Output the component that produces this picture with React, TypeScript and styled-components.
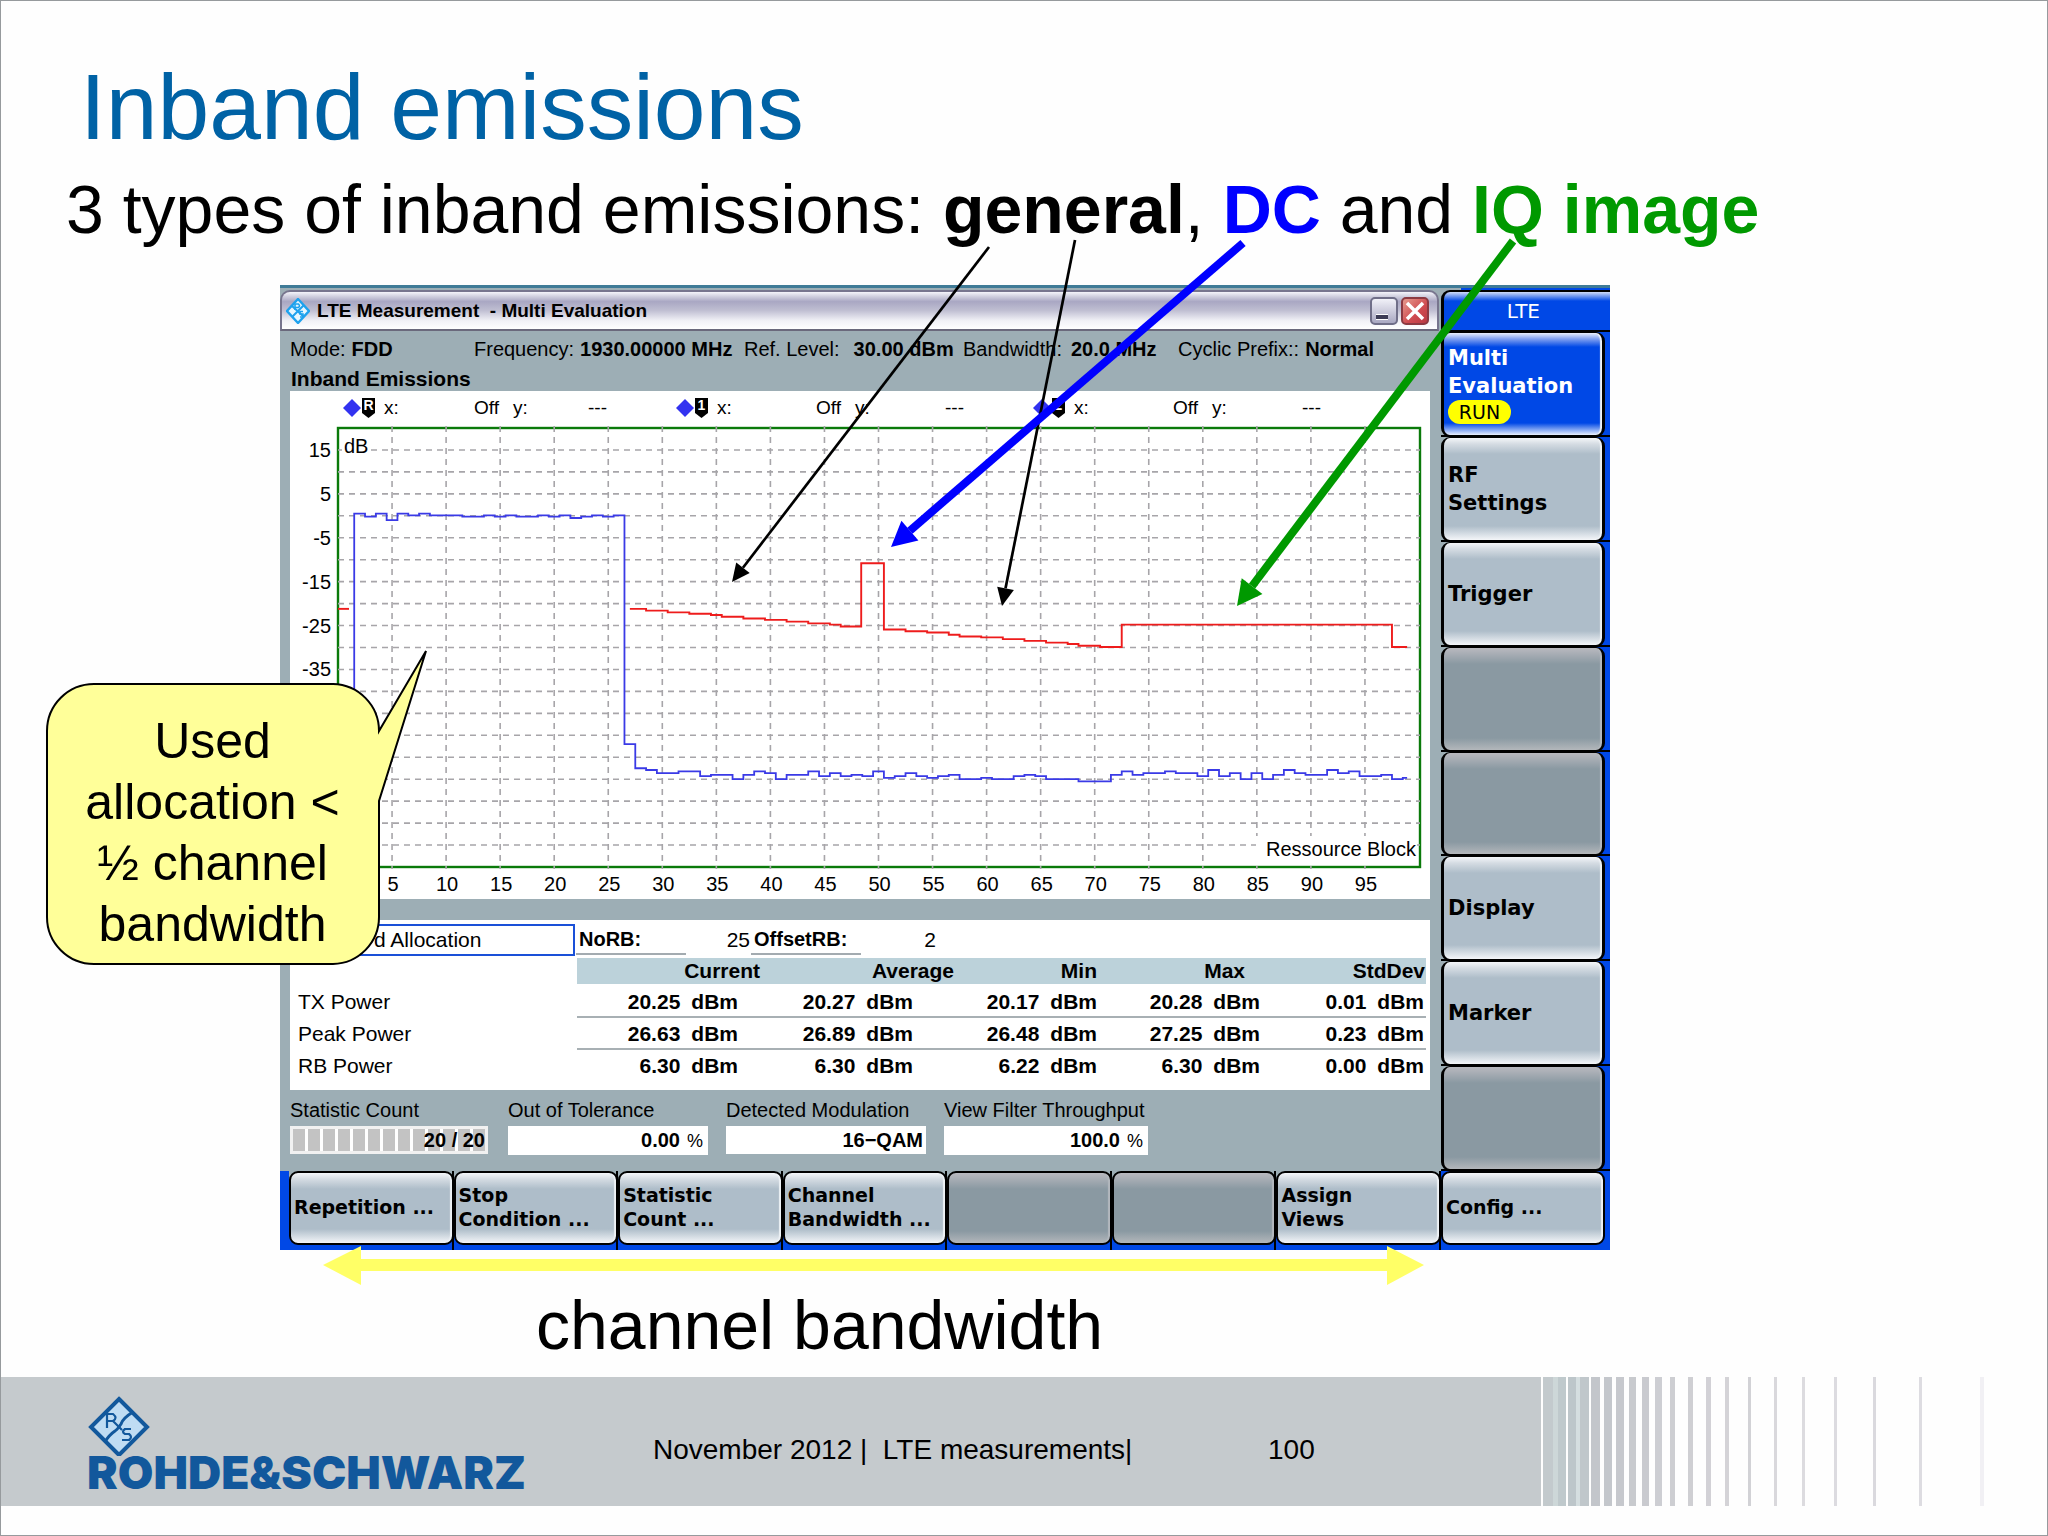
import React from "react";
import styled, { createGlobalStyle, css } from "styled-components";

const sans = `"Liberation Sans", Arial, sans-serif`;
const keyFont = `"DejaVu Sans", Verdana, sans-serif`;

const color = {
  body: "#9daeb5",
  blue: "#0048e6",
  key: "#aebdc9",
  keyOff: "#8a99a2",
  band: "#bcd2da",
};

const GlobalStyle = createGlobalStyle`
  *, *::before, *::after { box-sizing: border-box; }
  body { margin: 0; background: #fff; }
`;

/* ---------- slide ---------- */

const Slide = styled.main`
  position: relative;
  display: flex;
  flex-direction: column;
  min-height: 100vh;
  border: 1px solid #969a9d;
  background: #fefefe;
  color: #000;
  font-family: ${sans};
`;

const Title = styled.h1`
  margin: 46px 0 0;
  padding-left: 79px;
  font: 400 93px/120px ${sans};
  color: #0062a5;
`;

const Subtitle = styled.p`
  margin: 2px 0 0;
  padding-left: 65px;
  font-size: 68px;
  line-height: 80px;
  white-space: nowrap;
`;

const Term = styled.strong<{ $tone?: string }>`
  color: ${(p) => p.$tone ?? "inherit"};
`;

const Stage = styled.section`
  padding: 36px 437px 0 279px;
`;

const Caption = styled.p`
  margin: 35px 0 12px;
  padding-left: 535px;
  font-size: 68px;
  line-height: 80px;
`;

/* ---------- instrument window ---------- */

const Window = styled.div`
  display: flex;
  flex-direction: column;
  border-top: 3px solid #3f7b97;
  background: ${color.body};
`;

const Upper = styled.div`
  display: grid;
  grid-template-columns: 1fr 169px;
`;

const MainArea = styled.div`
  display: flex;
  flex-direction: column;
  min-width: 0;
  padding-top: 2px;
`;

const TitleBar = styled.header`
  display: flex;
  align-items: center;
  gap: 7px;
  height: 41px;
  margin-right: 2px;
  padding: 0 8px 0 4px;
  border: 2px solid #77758e;
  border-bottom-color: #6a697c;
  border-radius: 10px 10px 0 0;
  background: linear-gradient(#f4f4fa 0, #d0cfdf 12%, #a9a7c3 26%, #c0bfd2 50%, #f2f2f7 78%, #ffffff 100%);
`;

const WindowTitle = styled.h2`
  flex: 1;
  margin: 0;
  font-size: 19px;
  line-height: 24px;
  white-space: pre;
`;

const WindowButton = styled.button<{ $close?: boolean }>`
  display: flex;
  width: 28px;
  height: 28px;
  margin-left: -4px;
  padding: 0;
  border: 2px solid ${(p) => (p.$close ? "#8c3a42" : "#6f6e88")};
  border-radius: 5px;
  background: ${(p) =>
    p.$close ? "linear-gradient(135deg, #e69a8e, #cf4a4f 60%, #b93a44)" : "linear-gradient(#f1f1f8, #a9a8c2)"};
`;

const InfoRow = styled.dl`
  display: grid;
  grid-template-columns: 184px 270px 219px 215px 1fr;
  margin: 0;
  padding: 0 10px;
  font-size: 20px;
  line-height: 36px;
  white-space: nowrap;
`;

const InfoItem = styled.div<{ $gap?: number }>`
  display: flex;
  gap: ${(p) => p.$gap ?? 6}px;
  dd { margin: 0; font-weight: 700; }
`;

const PanelHeading = styled.h3`
  margin: 0;
  padding-left: 11px;
  font-size: 21px;
  line-height: 24px;
`;

const Panel = styled.section`
  margin: 0 11px 0 10px;
  background: #fff;
`;

const MarkerRow = styled.div`
  display: grid;
  grid-template-columns: 333px 357px 1fr;
  height: 34px;
  padding-left: 53px;
  font-size: 19px;
  line-height: 32px;
`;

const Marker = styled.div<{ $wide?: boolean }>`
  display: grid;
  grid-template-columns: 19px 22px ${(p) => (p.$wide ? 99 : 90)}px 39px ${(p) => (p.$wide ? 90 : 75)}px 1fr;
  align-items: center;
  white-space: nowrap;
`;

const MarkerTag = styled.span`
  width: 13px;
  height: 20px;
  background: #000;
  clip-path: polygon(0 0, 100% 0, 100% 75%, 50% 100%, 0 75%);
  color: #fff;
  font-size: 14px;
  font-weight: 700;
  line-height: 15px;
  text-align: center;
`;

const ChartSvg = styled.svg`
  display: block;
  width: 100%;
  height: auto;
  font-family: ${sans};
  font-size: 20px;
`;

/* ---------- result table ---------- */

const ResultPanel = styled(Panel)`
  margin-top: 21px;
  padding: 4px 4px 8px 0;
`;

const AllocationRow = styled.div`
  display: grid;
  grid-template-columns: 285px 110px 63px 110px 74px;
  align-items: center;
  column-gap: 1px;
  height: 34px;
  padding-bottom: 3px;
  font-size: 21px;
  line-height: 28px;
`;

const AllocationField = styled.span`
  padding-left: 82px;
  border: 2px solid #1a50d8;
`;

const AllocationLabel = styled.strong`
  padding-left: 3px;
  border-bottom: 2px solid #a3abb0;
  font-size: 20px;
`;

const AllocationValue = styled.span`
  text-align: right;
`;

const ResultTable = styled.table`
  width: 100%;
  border-collapse: collapse;
  table-layout: fixed;
  font-size: 21px;
  line-height: 26px;
`;

const LabelCol = styled.col`
  width: 287px;
`;

const HeadCell = styled.th<{ $inset?: number; $blank?: boolean }>`
  height: 28px;
  padding: 0 ${(p) => p.$inset ?? 0}px 2px 0;
  background: linear-gradient(${(p) => (p.$blank ? "#fff" : color.band)} 26px, #fff 26px);
  text-align: right;
`;

const RowLabel = styled.th`
  height: 32px;
  padding: 0 0 0 8px;
  font-weight: 400;
  text-align: left;
`;

const ValueCell = styled.td<{ $inset?: number }>`
  height: 32px;
  padding: 0 ${(p) => p.$inset ?? 0}px 0 0;
  font-weight: 700;
  text-align: right;
  white-space: nowrap;
  background: linear-gradient(transparent 30px, #a8b0b4 30px);
  tr:last-child > & { background: none; }
`;

const Unit = styled.span`
  margin-left: 11px;
`;

/* ---------- statistics ---------- */

const StatRow = styled.dl`
  display: grid;
  grid-template-columns: 200px 200px 200px 204px;
  column-gap: 18px;
  margin: 0;
  padding: 6px 10px 16px;
  font-size: 20px;
`;

const Stat = styled.div`
  dt { line-height: 28px; margin-bottom: 2px; white-space: nowrap; }
`;

const StatValue = styled.dd<{ $progress?: boolean }>`
  margin: 0;
  padding-right: 3px;
  background: #fff;
  font-weight: 700;
  line-height: 28px;
  text-align: right;
  ${(p) =>
    p.$progress &&
    css`
      margin-right: 2px;
      border: 3px solid #f1f1f1;
      padding-right: 0;
      line-height: 22px;
      background: repeating-linear-gradient(90deg, #c3c3c3 0 12px, #fff 12px 15px);
    `}
`;

const Percent = styled.span`
  margin: 0 2px 0 7px;
  font-size: 18px;
  font-weight: 400;
`;

/* ---------- keys ---------- */

const SideColumn = styled.nav`
  display: flex;
  flex-direction: column;
  padding-top: 2px;
  background: linear-gradient(90deg, ${color.body} 0 20px, ${color.blue} 20px);
`;

const SideTitle = styled.div`
  height: 42px;
  padding-right: 70px;
  border: solid #000;
  border-width: 2px 0 2px 3px;
  border-radius: 9px 0 0 0;
  background: linear-gradient(#cfdcf8 0, ${color.blue} 9px);
  color: #fff;
  font: 400 20px/38px ${keyFont};
  text-align: right;
`;

const SideSlot = styled.div`
  flex: 1;
  display: flex;
  min-height: 104px;
  padding-right: 5px;
  background: linear-gradient(transparent calc(100% - 2px), #000 0);
`;

const Key = styled.button<{ $active?: boolean; $small?: boolean }>`
  flex: 1;
  padding: 0 0 ${(p) => (p.$small ? 2 : 0)}px ${(p) => (p.$small ? 3 : 4)}px;
  border: 0 solid #000;
  border-width: ${(p) => (p.$small ? "2px" : "1px 3px 2px")};
  border-radius: 9px;
  color: ${(p) => (p.$active ? "#fff" : "#000")};
  font: 700 ${(p) => (p.$small ? "19px/24px" : "21px/28px")} ${keyFont};
  text-align: left;
  white-space: pre;
  box-shadow: inset -3px 0 1px -1px #eef2f6;
  background: ${(p) =>
    p.$active
      ? `linear-gradient(#e9effc 0, #7f9ff0 6px, ${color.blue} 14px, ${color.blue} calc(100% - 12px), #e9effc 100%)`
      : `linear-gradient(#f4f6f9 0, #d5dce3 6px, ${color.key} 16px, ${color.key} calc(100% - 14px), #f4f6f9 100%)`};
  &:disabled {
    box-shadow: inset -3px 0 1px -1px #b3b8be;
    background: linear-gradient(#b9b9bf 0, ${color.keyOff} 16px, ${color.keyOff} calc(100% - 12px), #b3b7bb 100%);
  }
`;

const RunBadge = styled.span`
  display: block;
  width: 63px;
  border-radius: 12px;
  background: #ffff00;
  color: #000;
  font-size: 19px;
  font-weight: 400;
  line-height: 24px;
  text-align: center;
`;

const BottomBar = styled.nav`
  display: grid;
  grid-template-columns: repeat(7, 1fr) 169px;
  padding-left: 9px;
  background: ${color.blue};
`;

const BottomSlot = styled.div<{ $last?: boolean }>`
  display: flex;
  height: 79px;
  padding: 0 ${(p) => (p.$last ? 5 : 0)}px 5px 0;
  background: ${(p) =>
    p.$last
      ? "none"
      : `linear-gradient(90deg, transparent calc(100% - 2px), #000 0), linear-gradient(${color.body} 12px, ${color.blue} 12px)`};
`;

/* ---------- callout and arrows ---------- */

const Overlay = styled.svg`
  position: absolute;
  top: 0;
  left: 0;
  width: 2046px;
  height: 1400px;
  max-width: 100%;
  pointer-events: none;
`;

const Callout = styled.aside`
  position: absolute;
  top: 681px;
  left: 45px;
  width: 333px;
  padding: 29px 24px 10px;
`;

const CalloutShape = styled.svg`
  position: absolute;
  top: -34px;
  left: 0;
  overflow: visible;
`;

const CalloutText = styled.p`
  position: relative;
  margin: 0;
  font-size: 50px;
  line-height: 61px;
  text-align: center;
`;

/* ---------- footer ---------- */

const Footer = styled.footer`
  display: flex;
  height: 129px;
`;

const FooterBand = styled.div`
  flex: 1;
  display: flex;
  align-items: center;
  background: #c5cacd;
  font-size: 28px;
  line-height: 36px;
  white-space: pre;
`;

const Brand = styled.div`
  display: flex;
  flex-direction: column;
  width: 566px;
  padding-left: 86px;
  color: #12589c;
`;

const BrandName = styled.span`
  font: 900 46px/32px Inter, ${sans};
`;

const FooterText = styled.span`
  width: 701px;
  padding: 16px 0 0 86px;
`;

const PageNumber = styled.span`
  padding-top: 16px;
`;

/* ---------- data ---------- */

const RB = 10.81;
const DB = 4.39;
const px = (rb: number) => 48 + rb * RB;
const py = (db: number) => 3 + (20 - db) * DB;

const allocated = [
  0.5, -0.2, 0.5, -1, 0.5, 0.1, 0.5, 0.1, 0.1, 0.1, -0.2, -0.2, 0.1, -0.2, 0.1, -0.2, -0.2, 0.1, -0.2, 0.1, -0.5,
  -0.2, 0.1, -0.2, 0.1,
];
const unallocated = [
  -52, -57.5, -57.9, -58.6, -58.6, -58.2, -58.2, -59.3, -59, -59, -60, -59, -58.2, -58.6, -60, -59, -59, -58.2,
  -59.3, -58.6, -59.3, -59, -59.3, -58.2, -59.7, -59.3, -58.6, -59.3, -59.7, -59.3, -59, -60, -60, -59.7, -60, -60,
  -59.3, -59, -59.3, -60, -60, -60, -60.5, -60.5, -60.5, -59, -58.2, -59, -58.6, -58.6, -58.2, -58.6, -58.6, -59.3,
  -57.9, -59.3, -58.6, -60, -58.6, -60, -59, -57.9, -58.6, -59, -59, -57.9, -58.6, -58.2, -59.3, -59.3, -59, -60,
];

const limitSteps: [number, number][] = [
  [27, -21.2], [28.5, -21.6], [30.5, -22], [32.5, -22.3], [34.5, -22.6], [35.5, -23], [37.5, -23.4], [39.5, -23.7],
  [41.5, -24.1], [43.5, -24.5], [45.5, -24.8], [46.5, -25.2], [48.4, -10.8], [50.5, -25.9], [52.5, -26.3],
  [54.5, -26.6], [56.5, -27.1], [57.5, -27.5], [59.5, -27.7], [61.5, -28.1], [63.5, -28.5], [65.5, -28.9],
  [67.5, -29.2], [68.5, -29.6], [70.5, -29.9], [72.5, -24.8], [97.5, -29.9],
];

function stepPath(steps: [number, number][], end: number) {
  return (
    steps
      .map(([rb, db], i) => (i === 0 ? `M${px(rb)} ${py(db)}` : `H${px(rb)}V${py(db)}`))
      .join("") + `H${px(end)}`
  );
}

const powerSteps: [number, number][] = [
  [1.5, -52],
  ...[...allocated, ...unallocated].map((db, i): [number, number] => [1.5 + i, db]),
  [98.5, -59.7],
];

const markers = [
  { tag: "R", wide: false },
  { tag: "1", wide: true },
  { tag: "2", wide: true },
];

const info = [
  { label: "Mode:", value: "FDD" },
  { label: "Frequency:", value: "1930.00000 MHz" },
  { label: "Ref. Level:", value: "30.00 dBm", gap: 14 },
  { label: "Bandwidth:", value: "20.0 MHz", gap: 9 },
  { label: "Cyclic Prefix::", value: "Normal" },
];

const columns = [
  { name: "Current", width: 183, head: 0, cell: 22 },
  { name: "Average", width: 194, head: 0, cell: 41 },
  { name: "Min", width: 143, head: 0, cell: 0 },
  { name: "Max", width: 163, head: 15, cell: 0 },
  { name: "StdDev", width: 166, head: 1, cell: 2 },
];

const rows = [
  { label: "TX Power", values: ["20.25", "20.27", "20.17", "20.28", "0.01"] },
  { label: "Peak Power", values: ["26.63", "26.89", "26.48", "27.25", "0.23"] },
  { label: "RB Power", values: ["6.30", "6.30", "6.22", "6.30", "0.00"] },
];

const sideKeys = ["RF\nSettings", "Trigger", "", "", "Display", "Marker", ""];
const bottomKeys = [
  "Repetition ...", "Stop\nCondition ...", "Statistic\nCount ...", "Channel\nBandwidth ...", "", "",
  "Assign\nViews", "Config ...",
];

const stripes: [number, number, string][] = [
  [2, 10, "#c3cacd"], [12, 5, "#cdd7d8"], [17, 8, "#bfc9cc"], [27, 8, "#bdc6ca"], [35, 4, "#d5dee0"],
  [39, 9, "#c0c7cb"], [50, 9, "#c3c6cb"], [63, 8, "#c4c7cc"], [75, 8, "#c6c8cd"], [88, 7, "#c8cace"],
  [101, 7, "#c9cacf"], [114, 7, "#cdced3"], [129, 5, "#cdced2"], [147, 5, "#cfcfd3"], [165, 5, "#d2d1d6"],
  [184, 4, "#d4d3d7"], [207, 3, "#d2d2d6"], [233, 3, "#d9d8dc"], [261, 3, "#dcdbdf"], [293, 3, "#dcdbe0"],
  [332, 3, "#dad9de"], [378, 3, "#dddce1"], [439, 4, "#f1f0f4"],
];

/* ---------- drawings ---------- */

function Chart() {
  const left = px(0);
  const right = px(100) + 1;
  const top = py(20);
  const bottom = py(-80);
  const rbTicks = Array.from({ length: 19 }, (_, i) => (i + 1) * 5);
  const dbTicks = Array.from({ length: 19 }, (_, i) => 15 - i * 5);
  const dbLabels = [15, 5, -5, -15, -25, -35];
  return (
    <ChartSvg viewBox="0 0 1140 474" role="img" aria-label="Inband emissions over resource blocks">
      <rect x={left} y={top} width={right - left} height={bottom - top} fill="none" stroke="#0a7a0a" strokeWidth="2.4" />
      <g stroke="#a7a5a9" strokeWidth="1.6">
        {dbTicks.map((db) => (
          <path key={db} d={`M${left} ${py(db)}H${right}`} strokeDasharray="6 5" />
        ))}
        {rbTicks.map((rb) => (
          <path key={rb} d={`M${px(rb)} ${top - 2}V${bottom + 2}`} strokeDasharray="6 5" />
        ))}
      </g>
      <g textAnchor="end">
        {dbLabels.map((db) => (
          <text key={db} x="41" y={py(db) + 7}>{db}</text>
        ))}
      </g>
      <g textAnchor="middle">
        {rbTicks.map((rb) => (
          <text key={rb} x={px(rb) + 1} y="466">{rb}</text>
        ))}
      </g>
      <rect x="52" y="8" width="27" height="26" fill="#fff" />
      <text x="54" y="28">dB</text>
      <rect x="966" y="411" width="161" height="26" fill="#fff" />
      <text x="1126" y="431" textAnchor="end">Ressource Block</text>
      <path d={stepPath(powerSteps, 98.9)} fill="none" stroke="#3a3ae6" strokeWidth="1.8" />
      <path d={stepPath(limitSteps, 98.9)} fill="none" stroke="#ee1c1c" strokeWidth="1.9" />
      <path d={`M${left} ${py(-21.2)}h11`} stroke="#ee1c1c" strokeWidth="1.9" />
    </ChartSvg>
  );
}

type ArrowProps = {
  from: [number, number];
  to: [number, number];
  weight: number;
  head: number;
  spread: number;
  tone: string;
};

function Arrow({ from, to, weight, head, spread, tone }: ArrowProps) {
  const dx = to[0] - from[0];
  const dy = to[1] - from[1];
  const len = Math.hypot(dx, dy);
  const ux = dx / len;
  const uy = dy / len;
  const bx = to[0] - ux * head;
  const by = to[1] - uy * head;
  const h = spread / 2;
  return (
    <g>
      <path d={`M${from[0]} ${from[1]}L${bx} ${by}`} stroke={tone} strokeWidth={weight} />
      <path d={`M${to[0]} ${to[1]}L${bx - uy * h} ${by + ux * h}L${bx + uy * h} ${by - ux * h}Z`} fill={tone} />
    </g>
  );
}

function WindowIcon() {
  return (
    <svg width="24" height="26" viewBox="0 0 24 26" aria-hidden="true">
      <path d="M12 1L23 13L12 25L1 13Z" fill="#e6f7ff" stroke="#1ea2ee" strokeWidth="2.4" />
      <path d="M6 8L18 19M18 7L12 13L6 19" stroke="#1ea2ee" strokeWidth="2" />
      <path d="M9 12V6h3.500q2 1.800 0 3.500H9M17 13.500h-3v2.500h3v3h-3" fill="none" stroke="#1ea2ee" strokeWidth="1.6" />
    </svg>
  );
}

function BrandMark() {
  return (
    <svg width="64" height="60" viewBox="0 0 64 60" aria-hidden="true" fill="none" stroke="#12589c">
      <path d="M32 3L60 31L32 59L4 31Z" strokeWidth="4" fill="#bfdcf3" />
      <path d="M46 16Q36 22 34 28Q30 34 28 35Q22 39 18 46" strokeWidth="3" />
      <path d="M20 32V18h6q5 4 0 7h-6M26 25L35 34" strokeWidth="2.200" />
      <path d="M44 33h-6q-4 3 0 5h4q4 3 0 6h-7" strokeWidth="2.200" />
    </svg>
  );
}

export default function App() {
  return (
    <>
      <GlobalStyle />
      <Slide>
        <Title>Inband emissions</Title>
        <Subtitle>
          3 types of inband emissions: <Term>general</Term>, <Term $tone="#0000ff">DC</Term> and{" "}
          <Term $tone="#009900">IQ image</Term>
        </Subtitle>

        <Stage>
          <Window>
            <Upper>
              <MainArea>
                <TitleBar>
                  <WindowIcon />
                  <WindowTitle>{"LTE Measurement  - Multi Evaluation"}</WindowTitle>
                  <WindowButton aria-label="Minimize">
                    <svg width="24" height="24" viewBox="0 0 24 24"><path d="M4 18h12" stroke="#fff" strokeWidth="6" /><path d="M4 18h12" stroke="#3d3c56" strokeWidth="4" /></svg>
                  </WindowButton>
                  <WindowButton $close aria-label="Close">
                    <svg width="24" height="24" viewBox="0 0 24 24"><path d="M4 4L20 20M20 4L4 20" stroke="#fff" strokeWidth="3.500" /></svg>
                  </WindowButton>
                </TitleBar>

                <InfoRow>
                  {info.map((item) => (
                    <InfoItem key={item.label} $gap={item.gap}>
                      <dt>{item.label}</dt>
                      <dd>{item.value}</dd>
                    </InfoItem>
                  ))}
                </InfoRow>
                <PanelHeading>Inband Emissions</PanelHeading>

                <Panel>
                  <MarkerRow>
                    {markers.map((m) => (
                      <Marker key={m.tag} $wide={m.wide}>
                        <svg width="18" height="18" viewBox="0 0 18 18" aria-hidden="true">
                          <path d="M9 0L18 9L9 18L0 9Z" fill="#3232f0" />
                        </svg>
                        <MarkerTag>{m.tag}</MarkerTag>
                        <span>x:</span>
                        <span>Off</span>
                        <span>y:</span>
                        <span>---</span>
                      </Marker>
                    ))}
                  </MarkerRow>
                  <Chart />
                </Panel>

                <ResultPanel>
                  <AllocationRow>
                    <AllocationField>d Allocation</AllocationField>
                    <AllocationLabel>NoRB:</AllocationLabel>
                    <AllocationValue>25</AllocationValue>
                    <AllocationLabel>OffsetRB:</AllocationLabel>
                    <AllocationValue>2</AllocationValue>
                  </AllocationRow>
                  <ResultTable>
                    <colgroup>
                      <LabelCol />
                      {columns.map((c) => <col key={c.name} width={c.width} />)}
                    </colgroup>
                    <thead>
                      <tr>
                        <HeadCell $blank />
                        {columns.map((c) => (
                          <HeadCell key={c.name} scope="col" $inset={c.head}>{c.name}</HeadCell>
                        ))}
                      </tr>
                    </thead>
                    <tbody>
                      {rows.map((r) => (
                        <tr key={r.label}>
                          <RowLabel scope="row">{r.label}</RowLabel>
                          {r.values.map((v, i) => (
                            <ValueCell key={columns[i].name} $inset={columns[i].cell}>
                              {v}<Unit>dBm</Unit>
                            </ValueCell>
                          ))}
                        </tr>
                      ))}
                    </tbody>
                  </ResultTable>
                </ResultPanel>

                <StatRow>
                  <Stat><dt>Statistic Count</dt><StatValue $progress>20 / 20</StatValue></Stat>
                  <Stat><dt>Out of Tolerance</dt><StatValue>0.00<Percent>%</Percent></StatValue></Stat>
                  <Stat><dt>Detected Modulation</dt><StatValue>16−QAM</StatValue></Stat>
                  <Stat><dt>View Filter Throughput</dt><StatValue>100.0<Percent>%</Percent></StatValue></Stat>
                </StatRow>
              </MainArea>

              <SideColumn aria-label="Softkeys">
                <SideTitle>LTE</SideTitle>
                <SideSlot>
                  <Key $active>{"Multi\nEvaluation"}<RunBadge>RUN</RunBadge></Key>
                </SideSlot>
                {sideKeys.map((label, i) => (
                  <SideSlot key={i}>
                    <Key disabled={!label}>{label}</Key>
                  </SideSlot>
                ))}
              </SideColumn>
            </Upper>

            <BottomBar aria-label="Hotkeys">
              {bottomKeys.map((label, i) => (
                <BottomSlot key={i} $last={i === bottomKeys.length - 1}>
                  <Key $small disabled={!label}>{label}</Key>
                </BottomSlot>
              ))}
            </BottomBar>
          </Window>
        </Stage>

        <Caption>channel bandwidth</Caption>

        <Footer>
          <FooterBand>
            <Brand>
              <BrandMark />
              <BrandName>ROHDE&amp;SCHWARZ</BrandName>
            </Brand>
            <FooterText>{"November 2012 |  LTE measurements|"}</FooterText>
            <PageNumber>100</PageNumber>
          </FooterBand>
          <svg width="506" height="129" viewBox="0 0 506 129" aria-hidden="true">
            {stripes.map(([x, w, tone]) => (
              <rect key={x} x={x} y="0" width={w} height="129" fill={tone} />
            ))}
          </svg>
        </Footer>

        <Overlay viewBox="1 1 2046 1400" preserveAspectRatio="xMinYMin meet" aria-hidden="true">
          <Arrow from={[989, 247]} to={[732, 582]} weight={2.7} head={18} spread={17} tone="#000" />
          <Arrow from={[1075, 240]} to={[1002, 606]} weight={2.7} head={18} spread={17} tone="#000" />
          <Arrow from={[1243, 243]} to={[891, 547]} weight={8} head={25} spread={26} tone="#0000ff" />
          <Arrow from={[1513, 241]} to={[1237, 606]} weight={8} head={25} spread={26} tone="#009900" />
          <path d="M323 1265L361 1246V1259H1387V1246L1424 1265L1387 1285V1271H361V1285Z" fill="#ffff66" />
        </Overlay>

        <Callout>
          <CalloutShape width="385" height="320" viewBox="0 0 385 320" aria-hidden="true">
            <path
              d="M48 36H287A47 47 0 0 1 333 83L380 3L333 153V269A47 47 0 0 1 287 316H48A47 47 0 0 1 1 269V83A47 47 0 0 1 48 36Z"
              fill="#ffff99"
              stroke="#000"
              strokeWidth="2"
            />
          </CalloutShape>
          <CalloutText>Used allocation &lt; ½ channel bandwidth</CalloutText>
        </Callout>
      </Slide>
    </>
  );
}
